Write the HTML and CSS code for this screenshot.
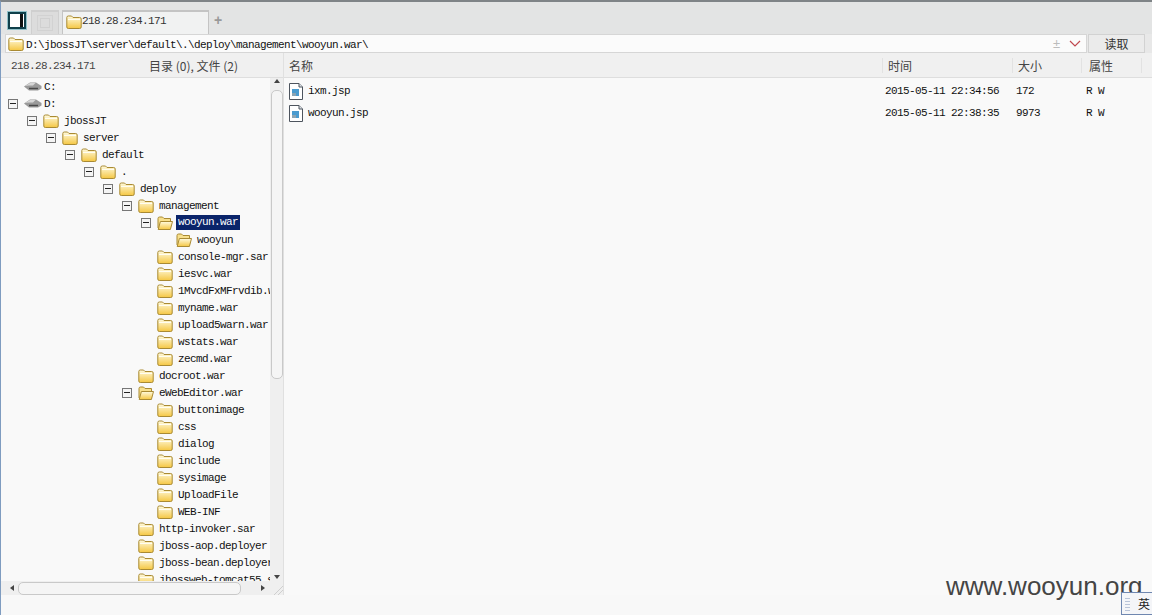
FILE: index.html
```html
<!DOCTYPE html>
<html lang="zh">
<head>
<meta charset="utf-8">
<title>218.28.234.171</title>
<link rel="stylesheet" href="styles.css">
</head>
<body>
<svg class="defs" width="0" height="0" aria-hidden="true">
  <defs>
    <linearGradient id="fg" x1="0" y1="0" x2="0" y2="1">
      <stop offset="0" stop-color="#fffbe0"/>
      <stop offset="1" stop-color="#f5c743"/>
    </linearGradient>
    <symbol id="folder" viewBox="0 0 16 14">
      <path d="M.8 12V2.500Q.8 1 2.300 1H5.500L7 2.500H13.700Q15.200 2.500 15.200 4V12Q15.200 13.500 13.700 13.500H2.300Q.8 13.500 .8 12Z" fill="url(#fg)" stroke="#a98a33"/>
      <path d="M2 4.500H14" stroke="#fffdf0"/>
    </symbol>
    <symbol id="folder-open" viewBox="0 0 16 14">
      <path d="M1 12V2.500Q1 1 2.500 1H5.500L7 2.500H13.500V5.500" fill="#f8e08c" stroke="#a98a33"/>
      <path d="M1.200 13.500L3.400 5.500H15.500L13.400 13.500Z" fill="url(#fg)" stroke="#a98a33"/>
    </symbol>
    <symbol id="drive" viewBox="0 0 18 11">
      <path d="M0 5.500L6 1.500H12L17.500 5V7.500L14 9.500H5Z" fill="#9a9a9a"/>
      <path d="M1 5L6 2H11.500L9 4.500H5Z" fill="#d6d6d6"/>
      <path d="M5 7.500L14 7.500" stroke="#4a4a4a" stroke-width="1.500"/>
    </symbol>
    <symbol id="file" viewBox="0 0 14 17">
      <path d="M.5.5H10L13.500 4V16.500H.5Z" fill="#fff" stroke="#4d545e"/>
      <path d="M10 .5V4H13.500" fill="#dfe3e8" stroke="#4d545e"/>
      <rect x="3" y="6" width="7" height="7" fill="#4a9bcf"/>
      <rect x="3" y="10" width="4" height="3" fill="#8ba4b3"/>
    </symbol>
  </defs>
</svg>

<div class="app">
  <header class="tabbar">
    <button class="panel-toggle" type="button" aria-label="toggle"><span class="panel-bar"></span></button>
    <div class="tab tab-idle">
      <svg class="idle-icon" width="16" height="16" viewBox="0 0 16 16"><rect x=".5" y=".5" width="15" height="15" fill="none" stroke="#c8c8c8" stroke-dasharray="1 1"/><rect x="3.500" y="3.500" width="9" height="9" fill="none" stroke="#d0d0d0"/></svg>
    </div>
    <div class="tab tab-active">
      <svg class="ico-folder"><use href="#folder"/></svg>
      <span class="tab-label">218.28.234.171</span>
    </div>
    <span class="tab-add">+</span>
  </header>

  <div class="addressbar">
    <div class="address">
      <svg class="ico-folder"><use href="#folder"/></svg>
      <span class="address-text">D:\jbossJT\server\default\.\deploy\management\wooyun.war\</span>
      <span class="address-plus">±</span>
      <svg class="address-caret" width="12" height="7" viewBox="0 0 12 7"><path d="M1 1L6 6L11 1" fill="none" stroke="#c0484f" stroke-width="1.200"/></svg>
    </div>
    <button class="read-btn" type="button">读取</button>
  </div>

  <div class="panes">
    <aside class="left">
      <div class="left-head">
        <span class="host">218.28.234.171</span>
        <span class="counts">目录 (0), 文件 (2)</span>
      </div>
      <div class="left-body">
        <div class="tree">
          <div class="node l0"><span class="exp none"></span><svg class="ico-drive"><use href="#drive"/></svg><span class="lbl lbl-drive">C:</span></div>
          <div class="node l0"><span class="exp"></span><svg class="ico-drive"><use href="#drive"/></svg><span class="lbl lbl-drive">D:</span></div>
          <div class="node l1"><span class="exp"></span><svg class="ico-folder"><use href="#folder"/></svg><span class="lbl">jbossJT</span></div>
          <div class="node l2"><span class="exp"></span><svg class="ico-folder"><use href="#folder"/></svg><span class="lbl">server</span></div>
          <div class="node l3"><span class="exp"></span><svg class="ico-folder"><use href="#folder"/></svg><span class="lbl">default</span></div>
          <div class="node l4"><span class="exp"></span><svg class="ico-folder"><use href="#folder"/></svg><span class="lbl">.</span></div>
          <div class="node l5"><span class="exp"></span><svg class="ico-folder"><use href="#folder"/></svg><span class="lbl">deploy</span></div>
          <div class="node l6"><span class="exp"></span><svg class="ico-folder"><use href="#folder"/></svg><span class="lbl">management</span></div>
          <div class="node l7"><span class="exp"></span><svg class="ico-folder"><use href="#folder-open"/></svg><span class="lbl selected">wooyun.war</span></div>
          <div class="node l8"><span class="exp none"></span><svg class="ico-folder"><use href="#folder-open"/></svg><span class="lbl">wooyun</span></div>
          <div class="node l7"><span class="exp none"></span><svg class="ico-folder"><use href="#folder"/></svg><span class="lbl">console-mgr.sar</span></div>
          <div class="node l7"><span class="exp none"></span><svg class="ico-folder"><use href="#folder"/></svg><span class="lbl">iesvc.war</span></div>
          <div class="node l7"><span class="exp none"></span><svg class="ico-folder"><use href="#folder"/></svg><span class="lbl">1MvcdFxMFrvdib.war</span></div>
          <div class="node l7"><span class="exp none"></span><svg class="ico-folder"><use href="#folder"/></svg><span class="lbl">myname.war</span></div>
          <div class="node l7"><span class="exp none"></span><svg class="ico-folder"><use href="#folder"/></svg><span class="lbl">upload5warn.war</span></div>
          <div class="node l7"><span class="exp none"></span><svg class="ico-folder"><use href="#folder"/></svg><span class="lbl">wstats.war</span></div>
          <div class="node l7"><span class="exp none"></span><svg class="ico-folder"><use href="#folder"/></svg><span class="lbl">zecmd.war</span></div>
          <div class="node l6"><span class="exp none"></span><svg class="ico-folder"><use href="#folder"/></svg><span class="lbl">docroot.war</span></div>
          <div class="node l6"><span class="exp"></span><svg class="ico-folder"><use href="#folder-open"/></svg><span class="lbl">eWebEditor.war</span></div>
          <div class="node l7"><span class="exp none"></span><svg class="ico-folder"><use href="#folder"/></svg><span class="lbl">buttonimage</span></div>
          <div class="node l7"><span class="exp none"></span><svg class="ico-folder"><use href="#folder"/></svg><span class="lbl">css</span></div>
          <div class="node l7"><span class="exp none"></span><svg class="ico-folder"><use href="#folder"/></svg><span class="lbl">dialog</span></div>
          <div class="node l7"><span class="exp none"></span><svg class="ico-folder"><use href="#folder"/></svg><span class="lbl">include</span></div>
          <div class="node l7"><span class="exp none"></span><svg class="ico-folder"><use href="#folder"/></svg><span class="lbl">sysimage</span></div>
          <div class="node l7"><span class="exp none"></span><svg class="ico-folder"><use href="#folder"/></svg><span class="lbl">UploadFile</span></div>
          <div class="node l7"><span class="exp none"></span><svg class="ico-folder"><use href="#folder"/></svg><span class="lbl">WEB-INF</span></div>
          <div class="node l6"><span class="exp none"></span><svg class="ico-folder"><use href="#folder"/></svg><span class="lbl">http-invoker.sar</span></div>
          <div class="node l6"><span class="exp none"></span><svg class="ico-folder"><use href="#folder"/></svg><span class="lbl">jboss-aop.deployer</span></div>
          <div class="node l6"><span class="exp none"></span><svg class="ico-folder"><use href="#folder"/></svg><span class="lbl">jboss-bean.deployer</span></div>
          <div class="node l6"><span class="exp none"></span><svg class="ico-folder"><use href="#folder"/></svg><span class="lbl">jbossweb-tomcat55.sar</span></div>
        </div>
        <div class="vscroll">
          <span class="arrow arrow-up"></span>
          <span class="vthumb"></span>
          <span class="arrow arrow-down"></span>
        </div>
      </div>
      <div class="hscroll">
        <span class="arrow arrow-left"></span>
        <span class="hthumb"></span>
        <span class="arrow arrow-right"></span>
        <svg class="grip" width="9" height="9" viewBox="0 0 9 9"><path d="M0 9L9 0M4 9L9 4" stroke="#cfcfcf"/></svg>
      </div>
    </aside>

    <main class="right">
      <div class="list-row list-head">
        <span class="cell">名称</span>
        <span class="cell">时间</span>
        <span class="cell">大小</span>
        <span class="cell">属性</span>
      </div>
      <div class="list-row file-row">
        <span class="cell cell-name"><svg class="ico-file"><use href="#file"/></svg>ixm.jsp</span>
        <span class="cell">2015-05-11 22:34:56</span>
        <span class="cell cell-size">172</span>
        <span class="cell cell-attr">R W</span>
      </div>
      <div class="list-row file-row">
        <span class="cell cell-name"><svg class="ico-file"><use href="#file"/></svg>wooyun.jsp</span>
        <span class="cell">2015-05-11 22:38:35</span>
        <span class="cell cell-size">9973</span>
        <span class="cell cell-attr">R W</span>
      </div>
    </main>
  </div>

  <div class="watermark">www.wooyun.org</div>
  <div class="ime"><span class="ime-grip"></span>英</div>
</div>
</body>
</html>
```
FILE: styles.css
```css
* { box-sizing: border-box; }
html, body { margin: 0; height: 100%; }
body {
  width: 1152px;
  height: 615px;
  overflow: hidden;
  background: #f8f8f8;
  color: #111;
  font: 11px/17px "Liberation Mono", "Noto Sans CJK SC", monospace;
  letter-spacing: -.6px;
}
.defs { position: absolute; }
.app {
  position: relative;
  display: flex;
  flex-direction: column;
  height: 615px;
  border-top: 2px solid #7f8487;
  border-left: 1px solid #7f9cc0;
}

.tabbar {
  display: flex;
  align-items: flex-end;
  height: 32px;
  padding-left: 7px;
  background: #e3e4e4;
}
.panel-toggle {
  width: 18px;
  height: 17px;
  margin: 0 5px 5px 0;
  padding: 0 1px 0 0;
  display: flex;
  justify-content: flex-end;
  background: #fff;
  border: 2px solid #0f3f4a;
  outline: 1px solid #8fc0c8;
}
.panel-bar { width: 3px; background: #111; }
.tab {
  display: flex;
  align-items: center;
  height: 24px;
  border: 1px solid #cfcfcf;
  border-bottom: 0;
  border-top-width: 2px;
}
.tab-idle {
  width: 28px;
  justify-content: center;
  background: #dcdcdc;
  margin-right: 3px;
}
.tab-active {
  width: 147px;
  padding: 0 0 3px 3px;
  background: #f1f2f2;
  border-color: #c4c4c4;
}
.tab-label { color: #333; line-height: 15px; }
.tab-add {
  margin: 0 0 4px 5px;
  font: 700 14px/20px "Liberation Sans", sans-serif;
  color: #999;
}

.addressbar {
  display: flex;
  gap: 1px;
  height: 19px;
  padding-left: 4px;
  padding-right: 7px;
  background: #e8e8e8;
}
.address {
  flex: 1;
  display: flex;
  align-items: center;
  gap: 2px;
  padding-left: 2px;
  background: #fbfbfb;
  border: 1px solid #d6d6d6;
  color: #111;
}
.address-text { flex: 1; padding-top: 3px; }
.address-plus {
  width: 12px;
  font: 13px/17px "Liberation Sans", sans-serif;
  color: #bcbcbc;
}
.address-caret { margin: 0 5px 0 2px; }
.read-btn {
  width: 57px;
  padding: 0;
  background: #ebebeb;
  border: 1px solid #d2d2d2;
  font: 12px/15px "Noto Sans CJK SC", sans-serif;
  letter-spacing: 0;
  color: #333;
}
.ico-folder { width: 16px; height: 14px; flex: none; }
.ico-drive { width: 18px; height: 11px; flex: none; }
.ico-file { width: 14px; height: 17px; flex: none; margin-right: 5px; }

.panes { flex: 1; display: flex; align-items: flex-start; min-height: 0; }
.left { width: 282px; display: flex; flex-direction: column; }
.left-head {
  display: flex;
  align-items: center;
  height: 25px;
  padding-left: 10px;
  background: #f0f0f0;
  border-bottom: 1px solid #dedede;
  color: #444;
}
.host { width: 138px; padding-top: 3px; }
.counts {
  padding-top: 1px;
  font: 12px/15px "Noto Sans CJK SC", sans-serif;
  letter-spacing: 0;
  color: #444;
}
.left-body { display: flex; height: 503px; overflow: hidden; }
.tree { width: 269px; overflow: hidden; background: #f9f9f9; }
.node {
  display: flex;
  align-items: center;
  height: 17px;
  white-space: nowrap;
}
.l0 { padding-left: 7px; }
.l1 { padding-left: 26px; }
.l2 { padding-left: 45px; }
.l3 { padding-left: 64px; }
.l4 { padding-left: 83px; }
.l5 { padding-left: 102px; }
.l6 { padding-left: 121px; }
.l7 { padding-left: 140px; }
.l8 { padding-left: 159px; }
.exp {
  position: relative;
  flex: none;
  width: 10px;
  height: 10px;
  margin-right: 6px;
  border: 1px solid #777;
  background: #f4f4f4;
}
.exp::after {
  content: "";
  position: absolute;
  left: 1px;
  top: 3px;
  width: 6px;
  height: 2px;
  border-top: 1px solid #222;
}
.exp.none { border: 0; background: none; }
.exp.none::after { display: none; }
.lbl { margin-left: 4px; padding: 1px 1px 0; line-height: 16px; color: #111; }
.lbl-drive { margin-left: 1px; }
.selected { background: #0a246a; color: #fff; line-height: 15px; margin-left: 3px; padding: 0 2px; }

.vscroll {
  position: relative;
  width: 13px;
  background: #efefef;
  display: flex;
  flex-direction: column;
  align-items: center;
}
.vthumb {
  width: 12px;
  height: 289px;
  margin-top: 12px;
  background: #f5f5f5;
  border: 1px solid #c9c9c9;
  border-radius: 5px;
}
.arrow { width: 0; height: 0; border: 3px solid transparent; }
.arrow-up { position: absolute; top: 1px; border-bottom: 4px solid #444; border-top: 0; }
.arrow-down { position: absolute; bottom: 2px; border-top: 4px solid #444; border-bottom: 0; }
.arrow-left { border-right: 4px solid #444; border-left: 0; margin: 0 4px 0 9px; }
.arrow-right { border-left: 4px solid #444; border-right: 0; margin-left: 20px; }
.hscroll {
  display: flex;
  align-items: center;
  width: 282px;
  height: 14px;
  background: #efefef;
}
.hthumb {
  width: 223px;
  height: 13px;
  background: #f5f5f5;
  border: 1px solid #c9c9c9;
  border-radius: 5px;
}
.grip { margin-left: 9px; align-self: flex-end; }

.right {
  flex: 1;
  height: 542px;
  background: #f9f9f9;
  border-left: 1px solid #e0e0e0;
}
.list-row {
  display: grid;
  grid-template-columns: 598px 130px 69px 61px;
  align-items: center;
}
.list-head {
  height: 25px;
  background: #f0f0f0;
  border-bottom: 1px solid #dedede;
  font: 12px/15px "Noto Sans CJK SC", sans-serif;
  letter-spacing: 0;
  color: #444;
}
.list-head .cell { padding-left: 5px; border-left: 1px solid #e2e2e2; }
.list-head .cell:first-child { border-left: 0; }
.list-head .cell:last-child { padding-left: 7px; border-right: 1px solid #e2e2e2; }
.file-row { height: 22px; color: #111; }
.file-row .cell { padding-left: 3px; padding-top: 1px; }
.file-row .cell-size { padding-left: 4px; }
.file-row .cell-attr { padding-left: 5px; }
.file-row:nth-child(2) { margin-top: 2px; }
.file-row .cell-name { display: flex; align-items: center; padding-left: 5px; padding-top: 1px; }

.watermark {
  position: absolute;
  left: 945px;
  top: 569px;
  font: 26px/30px "Liberation Sans", sans-serif;
  letter-spacing: 0;
  color: #454545;
}
.ime {
  position: absolute;
  left: 1120px;
  top: 590px;
  display: flex;
  align-items: center;
  justify-content: flex-end;
  width: 32px;
  height: 23px;
  padding-right: 3px;
  background: #f4f5f8;
  border: 1px solid #6f87b0;
  border-right: 0;
  font: 12px/16px "Noto Sans CJK SC", sans-serif;
  letter-spacing: 0;
  color: #222;
}
.ime-grip {
  position: absolute;
  left: 3px;
  top: 4px;
  width: 5px;
  height: 14px;
  background: repeating-linear-gradient(0deg, #b9c4d8 0 1px, transparent 1px 3px);
}
```
